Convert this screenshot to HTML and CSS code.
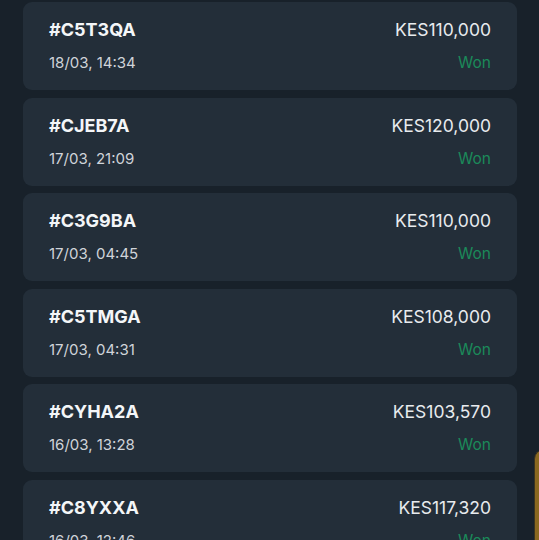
FILE: index.html
```html
<!DOCTYPE html>
<html lang="en">
<head>
  <meta charset="UTF-8">
  <meta name="viewport" content="width=device-width, initial-scale=1.0">
  <title>Bets</title>
  <link rel="stylesheet" href="styles.css">
</head>
<body>
  <div class="list">
    <div class="bet">
      <div class="row"><span class="code">#C5T3QA</span><span class="amount">KES110,000</span></div>
      <div class="row"><span class="date">18/03, 14:34</span><span class="status">Won</span></div>
    </div>
    <div class="bet">
      <div class="row"><span class="code">#CJEB7A</span><span class="amount">KES120,000</span></div>
      <div class="row"><span class="date">17/03, 21:09</span><span class="status">Won</span></div>
    </div>
    <div class="bet">
      <div class="row"><span class="code">#C3G9BA</span><span class="amount">KES110,000</span></div>
      <div class="row"><span class="date">17/03, 04:45</span><span class="status">Won</span></div>
    </div>
    <div class="bet">
      <div class="row"><span class="code">#C5TMGA</span><span class="amount">KES108,000</span></div>
      <div class="row"><span class="date">17/03, 04:31</span><span class="status">Won</span></div>
    </div>
    <div class="bet">
      <div class="row"><span class="code">#CYHA2A</span><span class="amount">KES103,570</span></div>
      <div class="row"><span class="date">16/03, 13:28</span><span class="status">Won</span></div>
    </div>
    <div class="bet">
      <div class="row"><span class="code">#C8YXXA</span><span class="amount">KES117,320</span></div>
      <div class="row"><span class="date">16/03, 12:46</span><span class="status">Won</span></div>
    </div>
  </div>
  <div class="float-tab"></div>
</body>
</html>
```
FILE: styles.css
```css
body { margin: 0; background: #18212a; font-family: Inter, "Noto Sans", sans-serif; overflow: hidden; }
.list { display: flex; flex-direction: column; gap: 7.5px; padding: 2px 22px 0 23px; }
.bet { background: #232e39; border-radius: 9px; height: 88px; box-sizing: border-box; padding: 17px 26px 0 26px; display: flex; flex-direction: column; gap: 12px; }
.row { display: flex; justify-content: space-between; align-items: center; }
.code { color: #f4f6f8; font-size: 18px; font-weight: 700; line-height: 22px; }
.amount { color: #e8ebee; font-size: 17.5px; line-height: 22px; }
.date { color: #d0d4d9; font-size: 15px; line-height: 20px; }
.status { color: #1b8a5a; font-size: 15.5px; line-height: 20px; }
.float-tab { position: fixed; left: 534px; top: 449px; width: 60px; height: 140px; background: #8a6820; border: 1px solid #3a3320; border-radius: 10px; }
```
